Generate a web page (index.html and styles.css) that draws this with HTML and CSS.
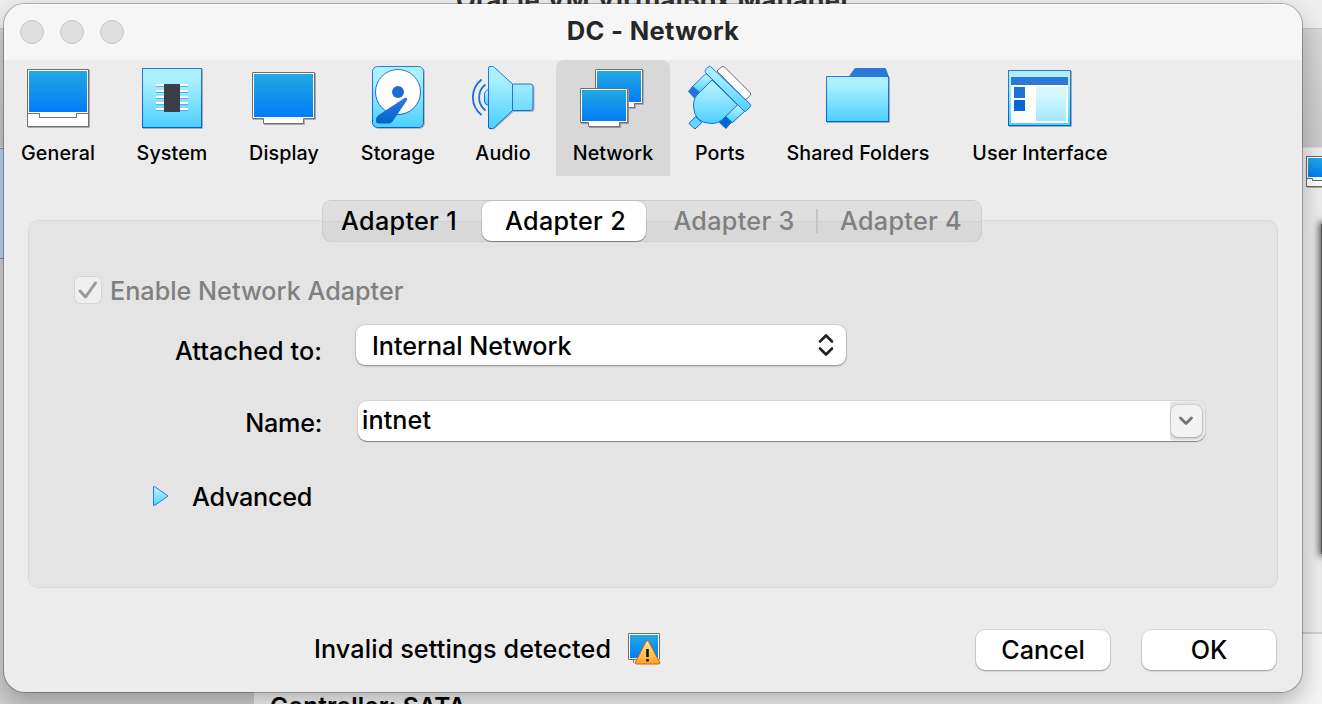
FILE: index.html
```html
<!DOCTYPE html>
<html lang="en">
<head>
<meta charset="utf-8">
<title>DC - Network</title>
<link rel="stylesheet" href="styles.css">
</head>
<body>
<svg class="defs" width="0" height="0" aria-hidden="true">
  <defs>
    <linearGradient id="screen" x1="0" y1="0" x2="0" y2="1"><stop offset="0" stop-color="#22a9e0"/><stop offset="1" stop-color="#007df8"/></linearGradient>
    <linearGradient id="sky" x1="0" y1="0" x2="0" y2="1"><stop offset=".2" stop-color="#aaf0ff"/><stop offset="1" stop-color="#4cd0ff"/></linearGradient>
    <linearGradient id="edge" x1="0" y1="0" x2="0" y2="1"><stop offset="0" stop-color="#3079d6"/><stop offset="1" stop-color="#0063d2"/></linearGradient>
    <linearGradient id="amber" x1="0" y1="0" x2="0" y2="1"><stop offset="0" stop-color="#ffe79a"/><stop offset="1" stop-color="#ffa51c"/></linearGradient>
  </defs>
</svg>

<div class="manager">
  <div class="manager-title">Oracle VM VirtualBox Manager</div>
  <div class="manager-tools"></div>
  <div class="manager-body">
    <div class="manager-list"><div class="manager-selected"></div></div>
    <div class="manager-details">
      <div class="manager-controller">Controller: SATA</div>
    </div>
  </div>
  <svg class="manager-vm" width="32" height="32" viewBox="0 0 32 32"><path d="M1 31.5H32" stroke="#aaa"/><rect x=".5" y=".5" width="34" height="30" fill="#fff" stroke="#666"/><rect x="2" y="2" width="32" height="19" fill="url(#screen)"/><path d="M.5 22.5H6.500V24.500H32" fill="none" stroke="#666"/></svg>
  <div class="manager-preview"></div>
</div>

<main class="window">
  <header class="titlebar">
    <div class="lights"><i></i><i></i><i></i></div>
    <h1 class="title">DC - Network</h1>
  </header>

  <nav class="toolbar">
    <a class="tool general">
      <svg class="icon" viewBox="0 0 64 64"><path d="M2 61.500H63.500V4" fill="none" stroke="#aaa"/><rect x="1.500" y="3.500" width="61" height="57" fill="#fff" stroke="#707070"/><rect x="3" y="5" width="58" height="41" fill="url(#screen)"/><path d="M1.500 47.500H13.500V51.500H50.500V47.500H62.500" fill="none" stroke="#707070"/></svg>
      <span>General</span></a>
    <a class="tool system">
      <svg class="icon" viewBox="0 0 64 64"><path d="M3 62.500H62.500V3" fill="none" stroke="#aaa"/><rect x="2.500" y="2.500" width="59" height="59" fill="url(#sky)" stroke="url(#edge)"/>
        <path d="M16 20.500H48M16 26.500H48M16 32.500H48M16 38.500H48M16 44.500H48" stroke="#66a6d8"/>
        <path d="M16 19H48M16 25H48M16 31H48M16 37H48M16 43H48" stroke="#fff" stroke-width="2"/>
        <rect x="24" y="18" width="16" height="28" fill="#3a3e49"/></svg>
      <span>System</span></a>
    <a class="tool display">
      <svg class="icon" viewBox="0 0 64 64"><path d="M1.500 7.500H63.500V53.500H52.500V58.500H12.500V53.500H1.500Z" fill="#aaa" stroke="#aaa"/><path d="M.5 6.500H62.500V52.500H51.500V57.500H11.500V52.500H.5Z" fill="#fff" stroke="#707070"/><rect x="2" y="8" width="59" height="43" fill="url(#screen)"/></svg>
      <span>Display</span></a>
    <a class="tool storage">
      <svg class="icon" viewBox="0 0 64 64"><rect x="7.500" y="1.500" width="51" height="61" rx="5" fill="#aaa" stroke="#bbb"/><rect x="6.500" y=".5" width="51" height="61" rx="5" fill="url(#sky)" stroke="url(#edge)"/><circle cx="32" cy="26" r="22.500" fill="#fff" stroke="url(#edge)"/><circle cx="32" cy="26" r="6" fill="#1d6cd3"/><path d="M38.500 32 12 49.500Q10 51 10 53V55Q10 57.500 12.500 57.500H23Q25 57.500 26.500 55.500L40.500 35Q42.500 31 38.500 32Z" fill="url(#edge)"/></svg>
      <span>Storage</span></a>
    <a class="tool audio">
      <svg class="icon" viewBox="0 0 64 64"><path d="M18.500 1.500H23L42.500 19H61Q63.500 19 63.500 22V43Q63.500 46 61 46H42.500L23 63.500H18.500Z" fill="#aaa" opacity=".8"/><path d="M18.500 24H16.500Q13.500 25 13.500 28V35Q13.500 38 16.500 39H18.500" fill="url(#sky)" stroke="url(#edge)"/><path d="M17.500 2Q17.500.5 19 .5H21.500Q22.500.5 23.500 1.500L41.500 18H59.500Q62 18 62 20.500V42Q62 44.500 59.500 44.500H41.500L23.500 61.500Q22.500 62.500 21.500 62.500H19Q17.500 62.500 17.500 61Z" fill="url(#sky)" stroke="url(#edge)"/><path d="M41.500 18V44.500" stroke="#2273d5"/><path d="M14.500 18.500C6 25 6 38 14.500 44.500M10.500 13.500C-1 23 -1 39.500 10.500 49" fill="none" stroke="#1d6fd5" stroke-width="1.800"/></svg>
      <span>Audio</span></a>
    <a class="tool network selected">
      <svg class="icon" viewBox="0 0 64 64"><path d="M15.500 4.500H62.500V38.500H54.500V42.500H30V38H15.500Z" fill="#999" stroke="#aaa"/><path d="M14.500 3.500H61.500V37.500H53.500V41.500H30V37.500H14.500Z" fill="#fff" stroke="#707070"/><rect x="16" y="5" width="44" height="31" fill="url(#screen)"/><path d="M.5 23.500H47.500V57.500H39.500V61.500H8.500V57.500H.5Z" fill="#999" stroke="#999"/><path d="M-.5 22.500H46.500V56.500H38.500V60.500H7.500V56.500H-.5Z" fill="#fff" stroke="#707070"/><rect x="1" y="24" width="44" height="31" fill="url(#screen)"/></svg>
      <span>Network</span></a>
    <a class="tool ports">
      <svg class="icon" viewBox="0 0 64 64"><g stroke-linejoin="round"><path d="M29 5 33.500 1Q35 0 36.500 1L62 26.500Q63.500 28 62 29.500L57.500 34Z" fill="#fff" stroke="#666"/><path d="M18 7.500 4.500 20.500 12 27 25 14Z" fill="url(#sky)" stroke="#2775d5"/><path d="M4.500 20.500 12 27 6.500 32 .5 25.500Z" fill="#2774d5" stroke="#2774d5"/><path d="M50 38 37 51 44 57 57 45Z" fill="url(#sky)" stroke="#176bd4"/><path d="M37 49 44 56 38 63 31 56.500Z" fill="#0865d3"/><path d="M7.500 50.500 14 56.500 7 63 1 57.500Z" fill="#62d6ff" stroke="#0b66d3"/><path d="M24 14 11 27Q5 32 5.500 40Q6 57 23 57.500Q31 58 37 51L49.500 39Z" fill="url(#sky)" stroke="#1c6fd4"/><path d="M22.500.500Q21.500-.2 20.500.7L17.500 4Q16.500 5.500 17.500 6.500L56 45Q57 46 58.500 44.500L62 41Q63.500 39.500 62 38Z" fill="url(#sky)" stroke="#2674d5"/></g></svg>
      <span>Ports</span></a>
    <a class="tool folders">
      <svg class="icon" viewBox="0 0 64 64"><path d="M22.500 11 28.500 2.500Q29 2 29.500 2H59Q59.700 2 60 2.700L63 11Z" fill="#2e78d5"/><path d="M1 56.500H63.500V11" fill="none" stroke="#aaa"/><rect x=".5" y="10.500" width="62" height="45" fill="url(#sky)" stroke="url(#edge)"/></svg>
      <span>Shared Folders</span></a>
    <a class="tool interface">
      <svg class="icon" viewBox="0 0 64 64"><path d="M1 60.500H63.500V5" fill="none" stroke="#aaa"/><rect x=".5" y="4.500" width="62" height="55" fill="url(#sky)" stroke="url(#edge)"/><rect x="3" y="11" width="57" height="46" fill="#fff"/><rect x="3" y="11" width="57" height="8" fill="#2d77d6"/><rect x="6" y="21" width="11" height="11" fill="#1f70d5"/><rect x="6" y="34" width="11" height="11" fill="#0666d4"/><rect x="28" y="21" width="30" height="34" fill="url(#sky)" opacity=".5"/></svg>
      <span>User Interface</span></a>
  </nav>

  <section class="pane">
    <div class="tabs">
      <button class="tab">Adapter 1</button>
      <button class="tab active">Adapter 2</button>
      <button class="tab disabled">Adapter 3</button>
      <i class="tab-divider"></i>
      <button class="tab disabled">Adapter 4</button>
    </div>
    <div class="enable">
      <span class="checkbox"><svg width="28" height="28" viewBox="0 0 28 28"><path d="M6 15 11.500 21 21.500 7" fill="none" stroke="#9a9a9a" stroke-width="3" stroke-linecap="round" stroke-linejoin="round"/></svg></span>
      <span class="enable-text">Enable Network Adapter</span>
    </div>
    <div class="row attached">
      <label class="attached-label">Attached to:</label>
      <div class="select"><span>Internal Network</span>
        <svg width="16" height="24" viewBox="0 0 16 24"><path d="M2 8.500 8 2.500 14 8.500M2 15.500 8 21.500 14 15.500" fill="none" stroke="#222" stroke-width="2.600" stroke-linecap="round" stroke-linejoin="round"/></svg>
      </div>
    </div>
    <div class="row name">
      <label class="name-label">Name:</label>
      <div class="combo"><span>intnet</span>
        <div class="combo-end"><div class="combo-button"><svg width="16" height="10" viewBox="0 0 16 10"><path d="M2.500 2 8 7.500 13.500 2" fill="none" stroke="#747474" stroke-width="2.800" stroke-linecap="round" stroke-linejoin="round"/></svg></div></div>
      </div>
    </div>
    <div class="advanced">
      <svg width="18" height="22" viewBox="0 0 18 22"><path d="M2.500 1.500 16 11 2.500 20.500Q1.500 21 1.500 20V2Q1.500 1 2.500 1.500Z" fill="url(#sky)" stroke="#2b78d5"/></svg>
      <span>Advanced</span>
    </div>
  </section>

  <footer class="footer">
    <span class="warning">Invalid settings detected</span>
    <svg class="warning-icon" width="33" height="33" viewBox="0 0 33 33"><path d="M.5.500H31.500V26.500H5.500V29.500V26.500H.5Z" fill="#fff" stroke="#707070"/><rect x="2" y="2" width="28" height="23" fill="url(#screen)"/><path d="M17.800 9Q19.300 6.500 20.800 9L31.500 29Q32.500 31 30.500 31H8.500Q6.500 31 7.500 29Z" fill="url(#amber)" stroke="#d95b1b"/><path d="M19.500 16V24M19.500 26V28.500" stroke="#111" stroke-width="2.600"/></svg>
    <button class="push cancel"><span>Cancel</span></button>
    <button class="push ok"><span>OK</span></button>
  </footer>
</main>
</body>
</html>
```

FILE: styles.css
```css
* { box-sizing: border-box; }
body {
  margin: 0;
  width: 1322px;
  height: 704px;
  overflow: hidden;
  position: relative;
  background: #e6e6e6;
  color: #000;
  font: 500 25.2px/32px Inter, "Liberation Sans", sans-serif;
}
svg { display: block; flex: none; }
button { font: inherit; letter-spacing: inherit; border: 0; padding: 0; color: inherit; }
span, label, h1 { white-space: nowrap; }
.defs { position: absolute; }

/* Manager window, mostly hidden behind the dialog */
.manager { height: 704px; display: flex; flex-direction: column; }
.manager-title {
  height: 29px;
  padding-left: 456px;
  background: #eee;
  border-bottom: 1px solid #c8c8c8;
  color: #333;
  font-size: 25.5px;
  font-weight: 700;
  line-height: 0;
  letter-spacing: .4px;
  white-space: nowrap;
}
.manager-tools { height: 119px; background: linear-gradient(#d6d6d6, #c8c8c8); border-bottom: 1px solid #dcdcdc; }
.manager-body { flex: 1; display: flex; }
.manager-list { width: 254px; background: #d0d0d0; }
.manager-selected { height: 111px; background: #b9d2f2; border: solid #6f93c2; border-width: 1px 0; }
.manager-details {
  flex: 1;
  display: flex;
  align-items: flex-end;
  background: linear-gradient(#ececec 0 484px, #cfcfcf 484px 486px, #f4f4f4 486px);
}
.manager-controller { height: 14px; padding-left: 16px; line-height: 32px; overflow: hidden; font-size: 24.5px; font-weight: 600; letter-spacing: .08px; }
.manager-vm { position: absolute; left: 1306px; top: 156px; }
.manager-preview { position: absolute; left: 1321px; top: 224px; width: 20px; height: 330px; background: #555; box-shadow: 0 0 7px 2px #555; }

/* Dialog */
.window {
  position: absolute;
  left: 4px;
  top: 4px;
  width: 1298px;
  height: 688px;
  border-radius: 21px;
  background: #ececec;
  overflow: hidden;
  display: flex;
  flex-direction: column;
  box-shadow: 0 0 0 1px rgba(0,0,0,.25), 0 10px 24px rgba(0,0,0,.28);
}
.titlebar { height: 56px; background: #f6f6f6; display: grid; grid-template-columns: 1fr auto 1fr; padding: 0 16px; box-shadow: inset 0 1px #fff; }
.lights { display: flex; gap: 16px; padding-top: 16px; }
.lights i { width: 24px; height: 24px; border-radius: 50%; background: #dfdfdf; border: 1px solid #c5c5c5; }
.title { margin: 0; padding-top: 11px; color: #262626; font-size: 25.5px; font-weight: 700; line-height: 32px; letter-spacing: .35px; }

.toolbar { display: flex; height: 116px; }
.tool { display: flex; flex-direction: column; align-items: center; padding-top: 6px; font-size: 19.7px; line-height: 26px; letter-spacing: .1px; }
.tool span { margin-top: 10px; }
.icon { width: 64px; height: 64px; overflow: visible; }
.general { width: 108px; }
.system { width: 120px; }
.display { width: 104px; }
.storage { width: 124px; }
.audio { width: 86px; margin-right: 10px; }
.network { width: 114px; letter-spacing: 0; }
.ports { width: 100px; }
.folders { width: 176px; }
.interface { width: 188px; }
.selected { background: #d8d8d8; border-radius: 8px 8px 0 0; }

.pane { margin: 44px 24px 0; height: 368px; border: 1px solid #d9d9d9; border-radius: 10px; background: #e4e4e4; }
.tabs {
  display: flex;
  align-items: center;
  width: 660px;
  height: 42px;
  margin: -21px 0 0 293px;
  border: 1px solid rgba(0,0,0,.06);
  border-radius: 9px;
  background: linear-gradient(#dfdfdf 0 20px, #d0d0d0 20px 21px, #d8d8d8 21px);
  letter-spacing: .3px;
}
.tab { flex: none; height: 40px; width: 158px; background: none; padding-right: 6px; line-height: 40px; white-space: nowrap; }
.tab.active { width: 164px; margin-left: 1px; padding: 0 0 0 3px; background: #fff; border-radius: 9px; box-shadow: 0 0 0 1px rgba(0,0,0,.08), 0 1px 1px rgba(0,0,0,.35); }
.tab.disabled { color: #808080; padding: 0; width: 166px; }
.tab-divider { flex: none; width: 2px; height: 24px; background: #c4c4c4; }
.tab.active + .tab.disabled { padding-left: 6px; width: 170px; }

.enable { display: flex; gap: 8px; height: 32px; margin: 33px 0 0 45px; color: #808080; }
.checkbox { width: 28px; height: 28px; margin-top: 1px; border-radius: 6px; background: #efefef; box-shadow: inset 0 0 0 1px #d4d4d4; }
.row { display: flex; }
.row label { width: 293px; text-align: right; }
.attached { margin-top: 18px; height: 42px; }
.attached-label { padding-top: 10px; letter-spacing: .08px; }
.select { width: 490px; height: 40px; margin-left: 34px; padding: 0 12px 0 16px; display: flex; align-items: center; justify-content: space-between; background: #fff; border-radius: 9px; box-shadow: 0 0 0 1px rgba(0,0,0,.07), 0 1px 2px rgba(0,0,0,.35); }
.select span { padding-top: 2px; letter-spacing: -.05px; }
.name { margin-top: 34px; height: 42px; }
.name-label { padding-top: 6px; letter-spacing: -.3px; }
.combo { width: 847px; height: 40px; margin-left: 36px; padding-left: 4px; display: flex; justify-content: space-between; background: #fff; border-radius: 9px; box-shadow: 0 0 0 1px rgba(0,0,0,.06), 0 1px 1px rgba(0,0,0,.4); }
.combo > span { padding-top: 3px; letter-spacing: .1px; }
.combo-end { width: 35px; background: #e4e4e4; border: 1px solid #eee; border-left: 0; border-radius: 3px 9px 9px 3px; padding: 3px 0 0 1px; }
.combo-button { width: 31px; height: 32px; border-radius: 7px; background: #f2f2f2; box-shadow: 0 0 1px 1px rgba(0,0,0,.08), 0 1px 2px rgba(0,0,0,.22); display: grid; place-content: center; padding-right: 1px; }
.advanced { display: flex; align-items: center; gap: 22px; height: 32px; margin: 38px 0 0 123px; letter-spacing: -.25px; }
.advanced svg { margin-bottom: 2px; }

.footer { display: flex; align-items: flex-start; padding: 41px 26px 0 310px; }
.warning { padding-top: 4px; width: 314px; letter-spacing: .12px; }
.warning-icon { margin-top: 4px; }
.push { width: 134px; height: 40px; margin-top: 1px; border-radius: 9px; background: #fff; line-height: 38px; box-shadow: 0 0 0 1px rgba(0,0,0,.07), 0 1px 2px rgba(0,0,0,.3); }
.push span { display: block; margin-top: -1px; }
.cancel { margin-left: auto; margin-right: 32px; }
```
